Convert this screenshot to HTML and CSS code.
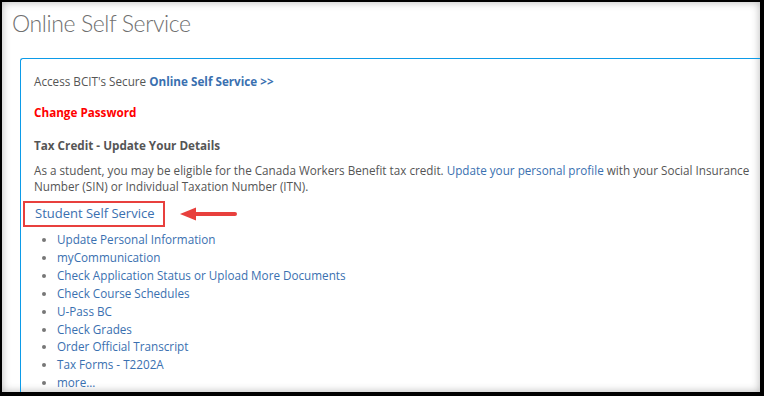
FILE: index.html
```html
<!DOCTYPE html>
<html lang="en">
<head>
    <meta charset="UTF-8">
    <meta name="viewport" content="width=device-width, initial-scale=1.0">
    <title>Online Self Service</title>
    <link rel="stylesheet" href="styles.css">
</head>
<body>
    <div class="frame">
        <h1 class="page-title">Online Self Service</h1>

        <div class="panel">
            <p class="access">Access BCIT's Secure <a class="strong-link" href="#">Online Self Service &gt;&gt;</a></p>

            <p class="change-pw"><a href="#">Change Password</a></p>

            <p class="tax-title">Tax Credit - Update Your Details</p>
            <p class="tax-text">As a student, you may be eligible for the Canada Workers Benefit tax credit. <a href="#">Update your personal profile</a> with your Social Insurance Number (SIN) or Individual Taxation Number (ITN).</p>

            <div class="sss">
                <h2 class="sss__title"><a href="#">Student Self Service</a></h2>
                <svg class="sss__arrow" width="60" height="14" viewBox="0 0 60 14">
                    <path d="M14 7 H56" stroke="#e8403d" stroke-width="4" stroke-linecap="round"/>
                    <path d="M1 7 L17 0.5 L17 13.5 Z" fill="#e8403d"/>
                </svg>
            </div>

            <ul class="links">
                <li><a href="#">Update Personal Information</a></li>
                <li><a href="#">myCommunication</a></li>
                <li><a href="#">Check Application Status or Upload More Documents</a></li>
                <li><a href="#">Check Course Schedules</a></li>
                <li><a href="#">U-Pass BC</a></li>
                <li><a href="#">Check Grades</a></li>
                <li><a href="#">Order Official Transcript</a></li>
                <li><a href="#">Tax Forms - T2202A</a></li>
                <li><a href="#">more...</a></li>
            </ul>
        </div>
    </div>
</body>
</html>
```

FILE: styles.css
```css
* { box-sizing: border-box; }

html, body {
  margin: 0;
  height: 100%;
  background: #000;
}

body {
  font-family: "Open Sans", sans-serif;
  font-size: 11.7px;
  color: #555;
}

a {
  color: #3a70b0;
  text-decoration: none;
}

.frame {
  margin: 2px 4px 0 2px;
  height: 390px;
  background: #fff;
  overflow: hidden;
  box-shadow: inset 0 0 8px rgba(0, 0, 0, 0.3);
  padding: 0 0 0 10px;
}

.page-title {
  margin: 0;
  padding-top: 4px;
  font-family: Lato, sans-serif;
  font-size: 23px;
  font-weight: 300;
  letter-spacing: -0.4px;
  color: #707070;
  line-height: 34px;
}

.panel {
  margin: 18px -20px 0 8px;
  border: 1px solid #0c9be8;
  border-right: 0;
  border-radius: 3px 0 0 0;
  padding: 14px 0 0 13px;
}

.panel p {
  margin: 0;
  line-height: 17px;
}

.access .strong-link {
  font-weight: 700;
}

.change-pw {
  padding-top: 14px;
}

.change-pw a {
  color: #f00;
  font-weight: 700;
}

.tax-title {
  padding-top: 16px;
}

.panel .tax-title {
  font-weight: 700;
}

.panel .tax-text {
  padding-top: 8px;
  padding-right: 12px;
  line-height: 16px;
}

.sss {
  display: flex;
  align-items: center;
  margin: 7px 0 0 -11px;
}

.sss__title {
  margin: 0;
  padding: 2px 9px 3px 10px;
  border: 2px solid #e8403d;
  font-size: 13px;
  font-weight: 400;
  line-height: 17px;
}

.sss__arrow {
  margin-left: 14px;
}

.links {
  margin: 4px 0 0;
  padding-left: 23px;
  list-style: disc;
}

.links li {
  line-height: 17.9px;
  color: #777;
}
```
